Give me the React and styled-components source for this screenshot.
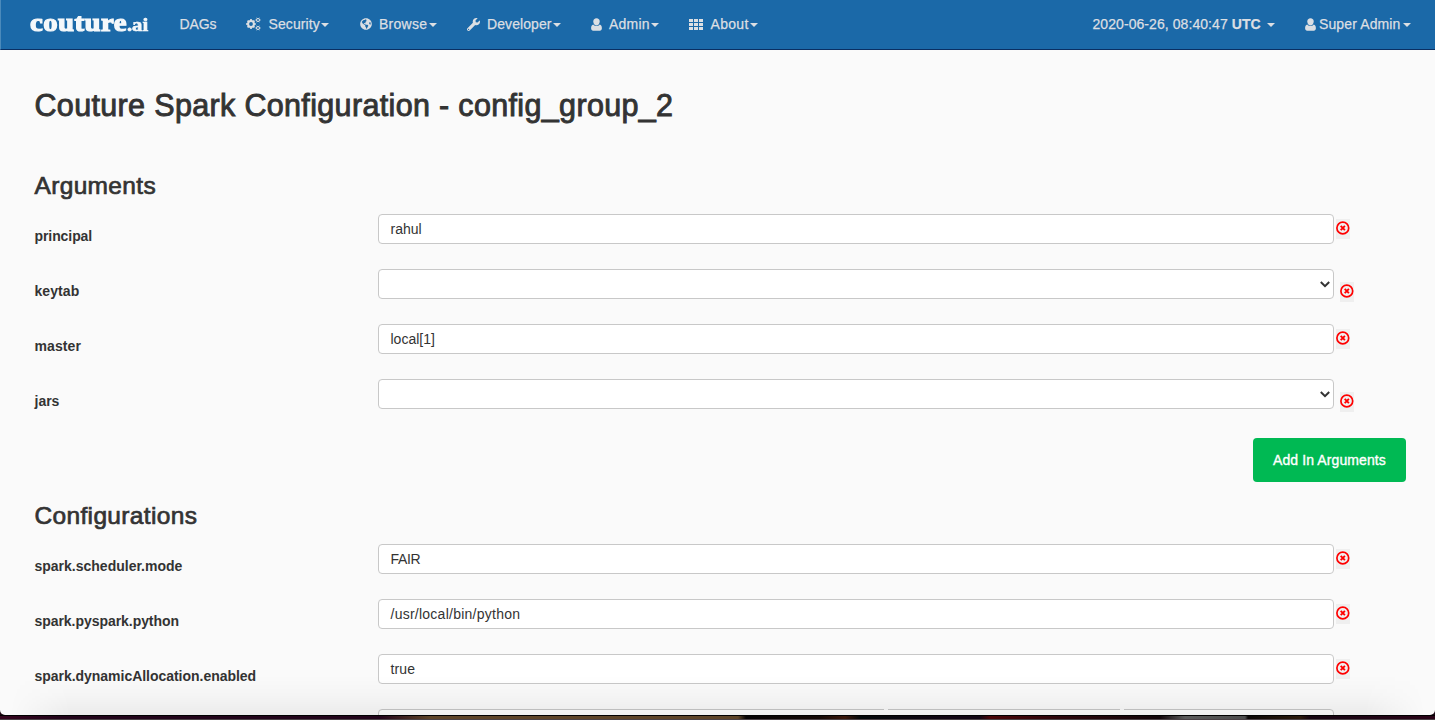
import React from "react";
import styled, { createGlobalStyle } from "styled-components";
import { FaGlobeAmericas, FaWrench } from "react-icons/fa";

const GlobalStyle = createGlobalStyle`
  * { box-sizing: border-box; }
  html, body { margin: 0; padding: 0; }
  body {
    width: 1435px;
    height: 720px;
    overflow: hidden;
    background: #1a0611;
    font-family: "Liberation Sans", Arial, sans-serif;
    font-size: 14px;
    line-height: 20px;
    color: #333;
  }
`;

const Desktop = styled.div`
  width: 1435px;
  height: 720px;
  overflow: hidden;
  display: flex;
  flex-direction: column;
  background: #1a0611;
`;

const Window = styled.div`
  position: relative;
  height: 715px;
  flex: none;
  overflow: hidden;
  background: #fafafa;
  border-radius: 0 0 5px 5px;
`;

const Backdrop = styled.div`
  height: 5px;
  border-top: 1px solid #000;
  border-bottom: 1px solid #4a4145;
  background: linear-gradient(
    90deg,
    #36051f 0, #22041a 60px, #22041a 380px, #5d4428 430px, #5d4428 738px,
    #050203 746px, #140906 820px, #3a170b 845px, #04080a 860px, #120613 950px,
    #120613 980px, #4a0508 990px, #2b050b 1060px, #12060a 1160px,
    #5a5a5a 1185px, #4c4c4c 1245px, #0a0605 1248px, #2b1a0c 1300px, #150410 1310px, #2a0418 1435px
  );
`;

const Navbar = styled.nav`
  display: flex;
  height: 50px;
  padding: 0 24px 0 29px;
  background: #1b69a8;
  border-bottom: 1px solid #0a2f63;
  border-left: 1px solid #4b8abb;
  color: #dcdfe3;
`;

const Brand = styled.div`
  width: 149.5px;
  line-height: 46px;
  font-family: "Liberation Serif", "Times New Roman", serif;
  font-weight: 700;
  font-size: 25px;
  letter-spacing: 0.4px;
  color: #f4f8fb;
  -webkit-text-stroke: 1.2px #f4f8fb;
  white-space: nowrap;
  transform: scaleX(1.15);
  transform-origin: 0 50%;
  small {
    font-size: 18px;
    letter-spacing: 0;
    -webkit-text-stroke-width: 0.6px;
  }
`;

const NavItem = styled.div`
  display: flex;
  align-items: center;
  flex: none;
  width: ${(p) => p.$width}px;
  height: 48px;
  white-space: pre;
  letter-spacing: ${(p) => p.$track || 0}px;
  -webkit-text-stroke: 0.25px currentColor;
`;

const IconSlot = styled.span`
  display: flex;
  width: ${(p) => p.$width}px;
  flex: none;
`;

const Spacer = styled.div`
  flex: 1;
`;

const Caret = styled.i`
  margin: 1px 0 0 ${(p) => p.$gap || 1.5}px;
  border: 4px solid transparent;
  border-top-color: currentColor;
  border-bottom: 0;
`;

const Page = styled.main`
  padding: 41px 29px 0 34.5px;
`;

const Title = styled.h1`
  margin: 0;
  height: 80px;
  font-size: 30.5px;
  line-height: 29px;
  font-weight: 400;
  letter-spacing: 0.34px;
  -webkit-text-stroke: 0.9px #333;
`;

const SectionTitle = styled.h2`
  margin: 0;
  height: ${(p) => p.$height}px;
  font-size: 24.5px;
  line-height: 29px;
  font-weight: 400;
  letter-spacing: 0.34px;
  -webkit-text-stroke: 0.7px #333;
`;

const Row = styled.div`
  display: flex;
  align-items: flex-start;
  height: 55px;
`;

const Label = styled.label`
  width: 343.5px;
  flex: none;
  padding-top: 12px;
  font-weight: 700;
  letter-spacing: ${(p) => p.$track || 0}px;
`;

const Field = styled.div`
  position: relative;
  display: flex;
  align-items: center;
  justify-content: space-between;
  width: 956px;
  height: 30px;
  flex: none;
  padding: 0 3px 0 11.5px;
  background: #fff;
  border: 1px solid #c8c8c8;
  border-radius: 4px;
  letter-spacing: ${(p) => p.$track || 0}px;
`;

const BorderGap = styled.span`
  position: absolute;
  top: -1px;
  left: ${(p) => p.$left}px;
  width: 4px;
  height: 1px;
  background: #fafafa;
`;

const Remove = styled.button`
  display: flex;
  width: 14px;
  height: 20px;
  margin: ${(p) => (p.$select ? "13px 0 0 5.5px" : "5px 0 0 2px")};
  padding: 2px 0 0;
  border: 0;
  background: #efefef;
  color: #f00;
`;

const Actions = styled.div`
  display: flex;
  justify-content: flex-end;
  height: 67px;
  padding-top: 4px;
`;

const AddButton = styled.button`
  width: 153px;
  height: 44px;
  padding: 0;
  border: 0;
  border-radius: 4px;
  background: #00b953;
  color: #fff;
  font: 14px/20px "Liberation Sans", Arial, sans-serif;
  letter-spacing: 0.1px;
  -webkit-text-stroke: 0.35px #fff;
`;

const BottomShade = styled.div`
  position: absolute;
  left: 10px;
  right: 10px;
  bottom: 0;
  height: 40px;
  background: linear-gradient(rgba(0, 0, 0, 0), rgba(0, 0, 0, 0.02) 50%, rgba(0, 0, 0, 0.06));
  mask-image: linear-gradient(90deg, transparent, #000 60px, #000 calc(100% - 60px), transparent);
  pointer-events: none;
`;

const Gear = ({ cx, cy, r, teeth, ring, tooth }) => (
  <g>
    <circle cx={cx} cy={cy} r={r} strokeWidth={ring} />
    {Array.from({ length: teeth }, (_, i) => {
      const angle = (i * 2 * Math.PI) / teeth;
      const x = Math.cos(angle);
      const y = Math.sin(angle);
      return (
        <line
          key={i}
          x1={cx + x * r}
          y1={cy + y * r}
          x2={cx + x * (r + tooth)}
          y2={cy + y * (r + tooth)}
          strokeWidth={tooth * 0.85}
        />
      );
    })}
  </g>
);

const CogsIcon = () => (
  <svg width="15" height="14" viewBox="0 0 15 14" fill="none" stroke="currentColor">
    <Gear cx={5} cy={7} r={2.9} teeth={8} ring={2} tooth={2} />
    <Gear cx={12} cy={3} r={1.5} teeth={6} ring={1} tooth={1.1} />
    <Gear cx={12} cy={11} r={1.5} teeth={6} ring={1} tooth={1.1} />
  </svg>
);

const UserIcon = () => (
  <svg width="11" height="13" viewBox="0 0 11 13" fill="currentColor">
    <path d="M5.5 0.3C7.500.3 8.700 1.600 8.700 3.400 8.700 5.400 7.400 7.400 5.500 7.400S2.300 5.400 2.300 3.400C2.300 1.600 3.500.3 5.500.3Z" />
    <path d="M2.300 6.600C3.200 7.600 4.300 8.100 5.500 8.100s2.300-.5 3.200-1.500C10.200 7 10.900 8.200 10.900 10.300c0 1.400-.9 2.400-2 2.400H2.100c-1.100 0-2-1-2-2.400C.1 8.200.8 7 2.300 6.600Z" />
  </svg>
);

const GridIcon = () => (
  <svg width="14" height="11" viewBox="0 0 14 11" fill="currentColor">
    {[0, 4, 8].map((y) => [0, 5, 10].map((x) => <rect key={`${x}-${y}`} x={x} y={y} width="4" height="3" />))}
  </svg>
);

const RemoveIcon = () => (
  <svg width="14" height="14" viewBox="0 0 14 14" fill="none" stroke="currentColor">
    <circle cx="6.8" cy="7" r="5.9" strokeWidth="1.7" />
    <path d="M4.700 4.900 8.900 9.100M8.900 4.900 4.700 9.100" strokeWidth="1.9" />
  </svg>
);

const Chevron = () => (
  <svg width="10" height="7" viewBox="0 0 10 7" fill="none" stroke="#333" strokeWidth="2">
    <path d="M0.800 1 5 5.200 9.200 1" />
  </svg>
);

const menus = [
  { text: "Security", icon: <CogsIcon />, slot: 22.5, width: 113.5, track: 0.1 },
  { text: "Browse", icon: <FaGlobeAmericas size={12} />, slot: 19.5, width: 107.5, track: 0.25 },
  { text: "Developer", icon: <FaWrench size={13} />, slot: 20, width: 123.5, track: 0.08 },
  { text: "Admin", icon: <UserIcon />, slot: 18.5, width: 98, track: 0.2 },
  { text: "About", icon: <GridIcon />, slot: 22, width: 89, track: 0.3 },
];

const argumentRows = [
  { name: "principal", value: "rahul", track: -0.08 },
  { name: "keytab", select: true, track: 0.08 },
  { name: "master", value: "local[1]", track: 0.1 },
  { name: "jars", select: true },
];

const configurationRows = [
  { name: "spark.scheduler.mode", value: "FAIR", valueTrack: -0.3 },
  { name: "spark.pyspark.python", value: "/usr/local/bin/python", track: -0.05, valueTrack: 0.25 },
  { name: "spark.dynamicAllocation.enabled", value: "true", track: -0.03, valueTrack: 0.1 },
];

const ConfigRow = ({ name, value, select, track, valueTrack }) => (
  <Row>
    <Label $track={track}>{name}</Label>
    <Field $track={valueTrack}>
      <span>{value}</span>
      {select && <Chevron />}
    </Field>
    <Remove $select={select} aria-label={`Remove ${name}`}>
      <RemoveIcon />
    </Remove>
  </Row>
);

export default function App() {
  return (
    <Desktop>
      <GlobalStyle />
      <Window>
        <Navbar>
          <Brand>couture<small>.ai</small></Brand>
          <NavItem $width={66.5} $track={-0.1}>DAGs</NavItem>
          {menus.map((m) => (
            <NavItem key={m.text} $width={m.width} $track={m.track}>
              <IconSlot $width={m.slot}>{m.icon}</IconSlot>
              {m.text}
              <Caret />
            </NavItem>
          ))}
          <Spacer />
          <NavItem $width={212.5} $track={0.07}>
            2020-06-26, 08:40:47 <b>UTC</b>
            <Caret $gap={6} />
          </NavItem>
          <NavItem $width={106} $track={0.12}>
            <IconSlot $width={14}><UserIcon /></IconSlot>
            Super Admin
            <Caret $gap={2.5} />
          </NavItem>
        </Navbar>
        <Page>
          <Title>Couture Spark Configuration - config_group_2</Title>
          <SectionTitle $height={43}>Arguments</SectionTitle>
          {argumentRows.map((r) => <ConfigRow key={r.name} {...r} />)}
          <Actions><AddButton>Add In Arguments</AddButton></Actions>
          <SectionTitle $height={43}>Configurations</SectionTitle>
          {configurationRows.map((r) => <ConfigRow key={r.name} {...r} />)}
          <Row>
            <Label />
            <Field>
              <BorderGap $left={505} />
              <BorderGap $left={741} />
            </Field>
          </Row>
        </Page>
        <BottomShade />
      </Window>
      <Backdrop />
    </Desktop>
  );
}
